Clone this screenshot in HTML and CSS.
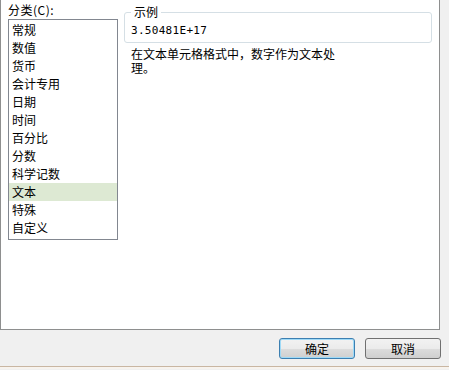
FILE: index.html
```html
<!DOCTYPE html>
<html lang="zh-CN">
<head>
    <meta charset="UTF-8">
    <meta name="viewport" content="width=device-width, initial-scale=1.0">
    <title>设置单元格格式</title>
    <link rel="stylesheet" href="styles.css">
</head>
<body>

<div class="dialog">
    <div class="panel">
        <div class="category">
            <label class="category-label">分类(C):</label>
            <div class="listbox">
                <div class="item">常规</div>
                <div class="item">数值</div>
                <div class="item">货币</div>
                <div class="item">会计专用</div>
                <div class="item">日期</div>
                <div class="item">时间</div>
                <div class="item">百分比</div>
                <div class="item">分数</div>
                <div class="item">科学记数</div>
                <div class="item selected">文本</div>
                <div class="item">特殊</div>
                <div class="item">自定义</div>
            </div>
        </div>

        <div class="detail">
            <fieldset class="sample">
                <legend>示例</legend>
                <div class="sample-value">3.50481E+17</div>
            </fieldset>
            <p class="description">在文本单元格格式中，数字作为文本处理。</p>
        </div>
    </div>

    <div class="footer">
        <button class="btn btn-default">确定</button>
        <button class="btn">取消</button>
    </div>
    <div class="edge"></div>
</div>

</body>
</html>
```

FILE: styles.css
```css
body {
    margin: 0;
    padding: 0;
    background-color: #f0f0f0;
    font-family: "Noto Sans CJK SC", "Liberation Sans", sans-serif;
    font-size: 12px;
    color: #000;
}
.dialog {
    width: 449px;
    height: 370px;
    overflow: hidden;
}
.panel {
    display: flex;
    box-sizing: border-box;
    width: 440px;
    height: 330px;
    padding-left: 7px;
    background-color: #fff;
    border: 1px solid #8e8f8f;
    border-top: none;
}
.category {
    padding-top: 2px;
}
.category-label {
    display: block;
    line-height: 16px;
    height: 17px;
    letter-spacing: 0.5px;
}
.listbox {
    box-sizing: border-box;
    width: 110px;
    height: 221px;
    padding-top: 1px;
    border: 1px solid #828790;
    background-color: #fff;
}
.item {
    height: 18px;
    line-height: 18px;
    padding-left: 3px;
}
.item.selected {
    background-color: #dde9d3;
}
.detail {
    margin-left: 6px;
    padding-top: 4px;
}
.sample {
    box-sizing: border-box;
    width: 308px;
    margin: 0;
    padding: 4px 6px 4px 6px;
    border: 1px solid #d5dfe5;
    border-radius: 3px;
}
.sample legend {
    padding: 0 3px;
    line-height: 16px;
}
.sample-value {
    font-family: "DejaVu Sans Mono", monospace;
    font-size: 11px;
    line-height: 14px;
    letter-spacing: 0.3px;
}
.description {
    width: 208px;
    margin: 4px 0 0 0;
    padding-left: 7px;
    line-height: 14px;
}
.footer {
    display: flex;
    justify-content: flex-end;
    gap: 10px;
    box-sizing: border-box;
    height: 37px;
    padding: 8px 8px 0 0;
    border-bottom: 1px solid #c9b6a2;
}
.btn {
    box-sizing: border-box;
    width: 76px;
    height: 21px;
    padding: 0;
    font-family: "Noto Sans CJK SC", sans-serif;
    font-size: 12px;
    line-height: 18px;
    color: #000;
    border: 1px solid #707070;
    border-radius: 3px;
    background: linear-gradient(#f2f2f2, #ebebeb 50%, #dddddd 50%, #cfcfcf);
}
.btn-default {
    border-color: #3c7fb1;
    box-shadow: inset 0 0 0 1px #9fdaf7;
}
.edge {
    height: 2px;
    background-color: #f7f3ee;
}
```
